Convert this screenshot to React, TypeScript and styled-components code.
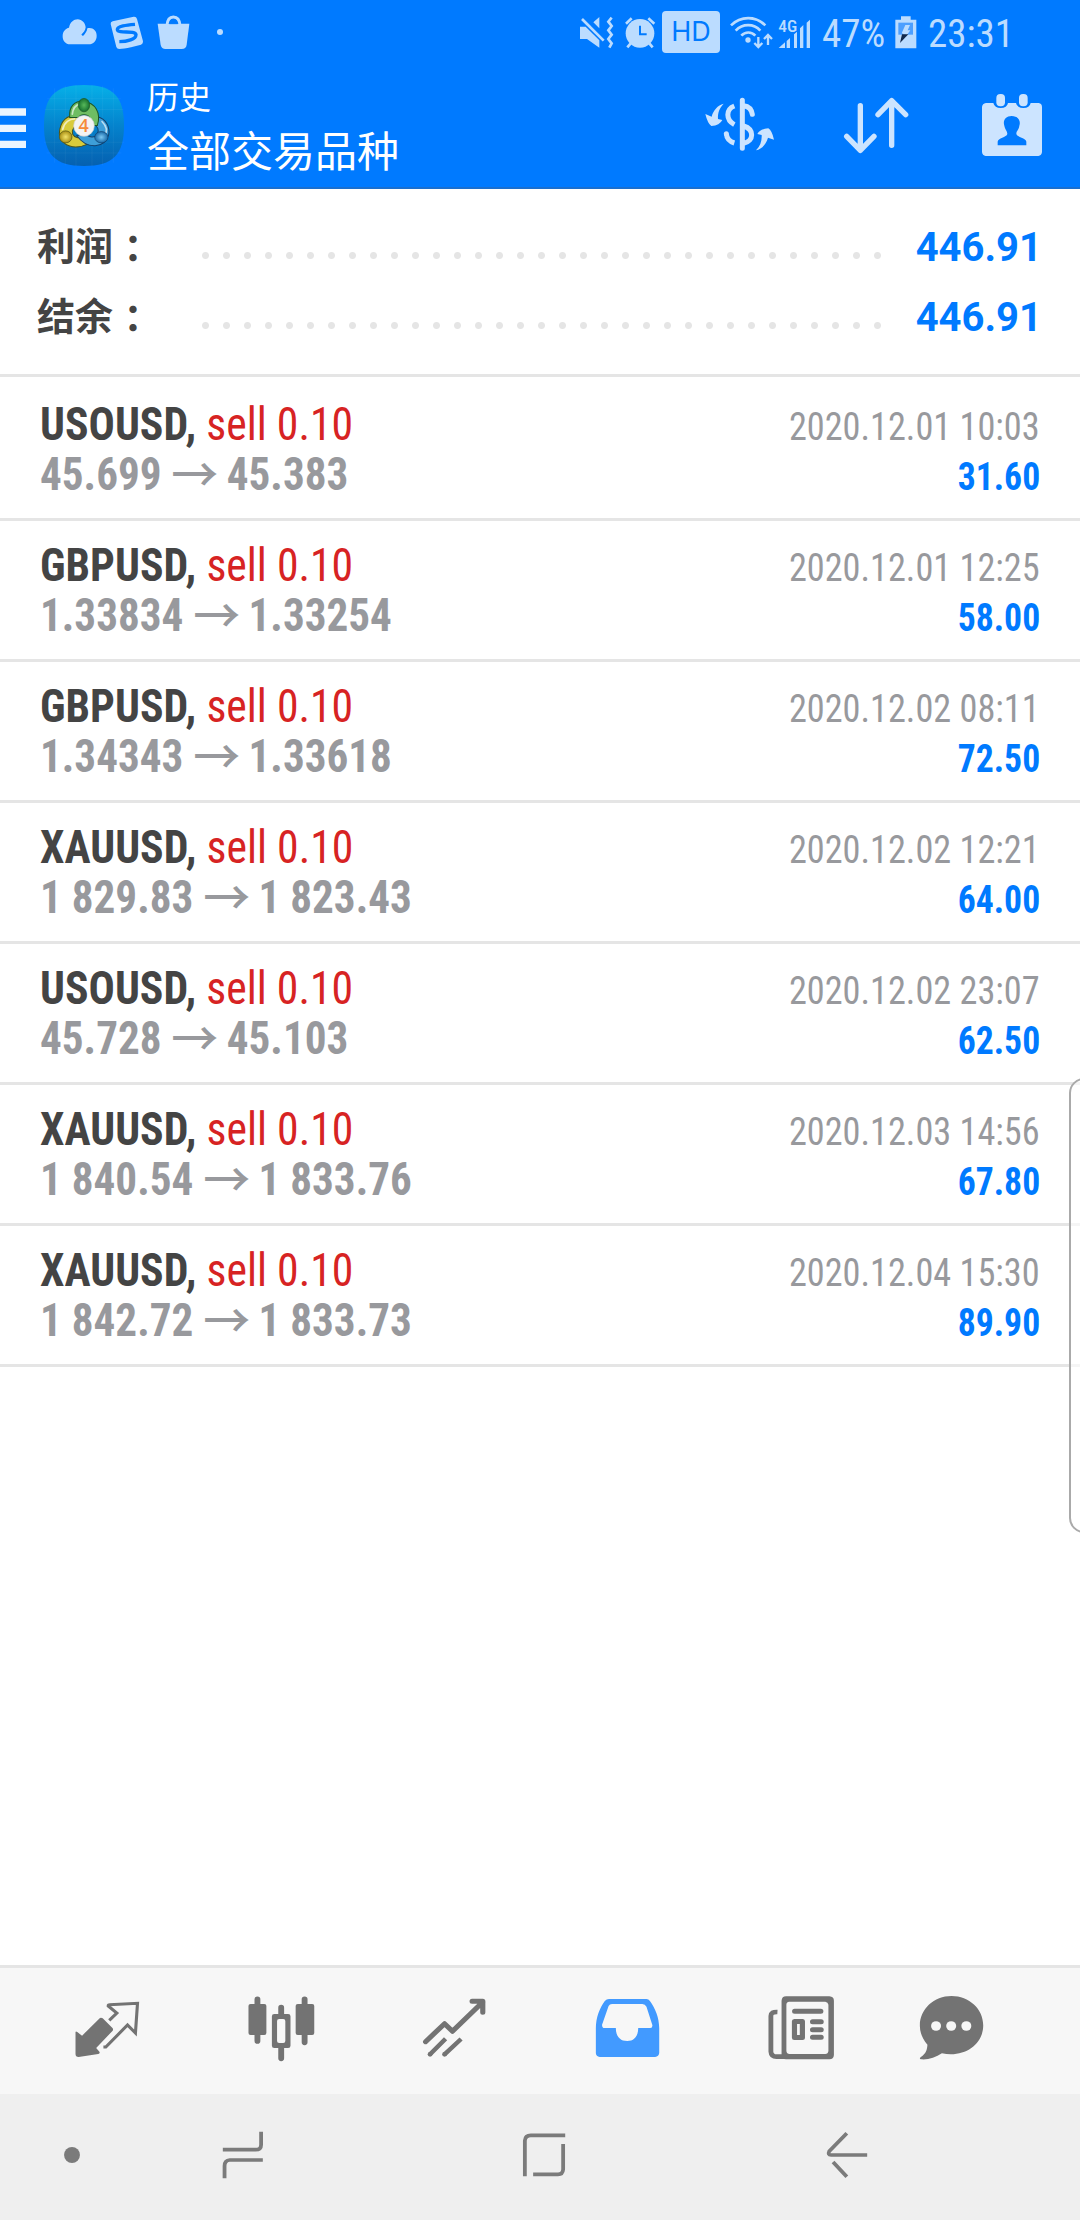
import React from "react";
import styled, { createGlobalStyle } from "styled-components";

const condensed = `"Roboto Condensed", Roboto, "Noto Sans CJK SC", sans-serif`;

const GlobalStyle = createGlobalStyle`
  body { margin: 0; background: #fff; }
  * { box-sizing: border-box; }
  svg { display: block; flex: none; }
`;

const Screen = styled.div`
  position: relative;
  width: 1080px;
  height: 2220px;
  display: flex;
  flex-direction: column;
  overflow: hidden;
  background: #fff;
  font-family: ${condensed};
`;

const Header = styled.header`
  height: 189px;
  background: #007aff;
  border-bottom: 2px solid #1a6fcf;
`;

const StatusBar = styled.div`
  height: 66px;
  display: flex;
  justify-content: space-between;
  align-items: flex-start;
  color: #bbdcff;
`;

const StatusGroup = styled.div`
  display: flex;
  align-items: flex-start;
  height: 66px;
`;

const StatusText = styled.span<{ $width: number; $gap: number }>`
  width: ${(p) => p.$width}px;
  margin-left: ${(p) => p.$gap}px;
  font-size: 39px;
  line-height: 46px;
  padding-top: 11px;
  white-space: nowrap;
`;

const HdBadge = styled.span`
  width: 58px;
  height: 42px;
  margin: 11px 0 0 6px;
  border-radius: 4px;
  background: #bbdcff;
  color: #007aff;
  font: 400 27px/42px Inter, sans-serif;
  text-align: center;
`;

const Toolbar = styled.div`
  height: 121px;
  display: flex;
  align-items: flex-start;
  padding-right: 37px;
`;

const Titles = styled.div`
  flex: 1;
  display: flex;
  flex-direction: column;
  padding: 9px 0 0 23px;
  color: #fff;
  font-family: Roboto, "Noto Sans CJK SC", sans-serif;
`;

const Subtitle = styled.span`
  font-size: 32px;
  line-height: 46px;
`;

const Title = styled.span`
  font-size: 42px;
  line-height: 64px;
`;

const Actions = styled.div`
  display: flex;
  padding-top: 26px;
  color: #cce4ff;
`;

const Summary = styled.section`
  height: 188px;
  padding: 22px 38px 0 37px;
  border-bottom: 3px solid #e5e5e5;
`;

const SummaryRow = styled.div`
  height: 70px;
  display: flex;
  align-items: center;
  color: #444;
`;

const SummaryLabel = styled.span`
  display: flex;
  width: 158px;
  padding-bottom: 3px;
  font: 700 38px/67px "Noto Sans CJK SC", sans-serif;
`;

const Colon = styled.span`
  padding: 2px 0 0 1px;
  font-family: "Noto Sans CJK JP", sans-serif;
`;

const Dots = styled.span`
  width: 693px;
  height: 21px;
  margin-top: 19px;
  background: radial-gradient(circle at center, #e5e5e5 3px, transparent 4px) 0 0 / 21px 21px;
`;

const SummaryValue = styled.span`
  flex: 1;
  padding-top: 3px;
  text-align: right;
  color: #007aff;
  font: 700 40px/67px Roboto, sans-serif;
`;

const DealList = styled.main`
  flex: 1;
  padding-top: 3px;
`;

const Deal = styled.article`
  height: 141px;
  display: flex;
  justify-content: space-between;
  padding: 19px 40px 0;
  border-bottom: 3px solid #e5e5e5;
`;

const DealSide = styled.div<{ $right?: boolean }>`
  display: flex;
  flex-direction: column;
  align-items: ${(p) => (p.$right ? "flex-end" : "flex-start")};
  padding-top: ${(p) => (p.$right ? 3 : 0)}px;
  white-space: nowrap;
`;

const Instrument = styled.div`
  font-size: 47px;
  line-height: 50px;
  font-weight: 700;
  color: #444;
  transform: scaleX(0.93);
  transform-origin: left;
`;

const Operation = styled.span`
  font-weight: 400;
  color: #d72323;
`;

const Prices = styled.div`
  display: flex;
  font-size: 47px;
  line-height: 50px;
  font-weight: 700;
  color: #98999d;
  transform: scaleX(0.918);
  transform-origin: left;
`;

const Arrow = styled.span`
  width: 71px;
  text-align: center;
  font-family: "Noto Sans CJK SC", sans-serif;
  font-weight: 500;
  transform: translate(1px, -2px) scaleX(1.09);
`;

const Time = styled.div`
  font-size: 39px;
  line-height: 50px;
  color: #98999d;
  transform: scaleX(0.93);
  transform-origin: right;
`;

const Profit = styled.div`
  font-size: 39px;
  line-height: 50px;
  font-weight: 700;
  color: #007aff;
  transform: scaleX(0.915);
  transform-origin: right;
`;

const EdgePanel = styled.aside`
  position: absolute;
  left: 1069px;
  top: 1078px;
  width: 30px;
  height: 455px;
  border: 2px solid #aaa;
  border-radius: 16px;
  background: rgba(255, 255, 255, 0.6);
`;

const TabBar = styled.nav`
  height: 129px;
  display: flex;
  padding-left: 21px;
  border-top: 3px solid #e5e5e5;
  background: #f7f7f7;
`;

const Tab = styled.div<{ $width?: number; $active?: boolean }>`
  width: ${(p) => p.$width ?? 173.2}px;
  padding-top: 25px;
  display: flex;
  justify-content: center;
  color: ${(p) => (p.$active ? "#429aff" : "#737373")};
`;

const SystemBar = styled.footer`
  height: 126px;
  display: grid;
  grid-template-columns: 144px 197px 406px 200px;
  justify-items: center;
  padding-top: 36px;
  background: #efefef;
  color: #7b7b7b;
`;

const Svg = styled.svg<{ $ml?: number; $mt?: number }>`
  margin-left: ${(p) => p.$ml ?? 0}px;
  margin-top: ${(p) => p.$mt ?? 0}px;
`;

type GlyphProps = { w: number; h: number; box: string; ml?: number; mt?: number; children: React.ReactNode };

const Glyph = ({ w, h, box, ml, mt, children }: GlyphProps) => (
  <Svg $ml={ml} $mt={mt} width={w} height={h} viewBox={box} preserveAspectRatio="none" fill="currentColor">
    {children}
  </Svg>
);

const TabGlyph = ({ x, children }: { x: number; children: React.ReactNode }) => (
  <Glyph w={74.4} h={70} box={`${x} 129 216 210`}>{children}</Glyph>
);

const line = { fill: "none", stroke: "currentColor" } as const;

const deals = [
  ["USOUSD", "45.699", "45.383", "2020.12.01 10:03", "31.60"],
  ["GBPUSD", "1.33834", "1.33254", "2020.12.01 12:25", "58.00"],
  ["GBPUSD", "1.34343", "1.33618", "2020.12.02 08:11", "72.50"],
  ["XAUUSD", "1 829.83", "1 823.43", "2020.12.02 12:21", "64.00"],
  ["USOUSD", "45.728", "45.103", "2020.12.02 23:07", "62.50"],
  ["XAUUSD", "1 840.54", "1 833.76", "2020.12.03 14:56", "67.80"],
  ["XAUUSD", "1 842.72", "1 833.73", "2020.12.04 15:30", "89.90"],
];

const AppLogo = () => (
  <Glyph w={80} h={81} box="132 255 240 242" ml={18} mt={19}>
    <defs>
      <linearGradient id="bg" x1="0" y1="0" x2="0" y2="1">
        <stop offset="0" stopColor="#06b0e8" />
        <stop offset="0.5" stopColor="#0483cd" />
        <stop offset="1" stopColor="#0560b0" />
      </linearGradient>
      <radialGradient id="green"><stop offset="0" stopColor="#58b95a" /><stop offset="1" stopColor="#17722f" /></radialGradient>
      <radialGradient id="gold"><stop offset="0" stopColor="#f2e36b" /><stop offset="1" stopColor="#a88d12" /></radialGradient>
      <radialGradient id="azure"><stop offset="0" stopColor="#7cc8f2" /><stop offset="1" stopColor="#1668a8" /></radialGradient>
    </defs>
    <path d="M252 255C340 255 372 290 372 376S340 497 252 497 132 462 132 376 164 255 252 255Z" fill="url(#bg)" />
    <path d="M164 265V487M196 257V495M228 255V497M276 255V497M308 257V495M340 265V487M142 296H362M134 328H370M132 426H372M140 458H364" stroke="#fff" strokeOpacity="0.07" strokeWidth="2" fill="none" />
    <path d="M236 346C202 342 180 362 178 400C184 440 226 450 266 430L254 408C240 416 224 414 218 402C214 388 222 376 240 374Z" fill="#d8cb3c" stroke="#4f5318" strokeWidth="3" />
    <path d="M292 350C318 356 330 380 326 404C314 444 262 450 230 406L256 402C268 412 284 414 292 402C298 390 294 378 280 372Z" fill="#3d9ed8" stroke="#123f6b" strokeWidth="3" />
    <path d="M209 352C206 316 226 302 252 304C286 308 304 338 292 376L268 376C272 352 268 344 252 344C242 344 238 348 236 352Z" fill="#6fbd63" stroke="#1c5526" strokeWidth="3" />
    <path d="M217 342C219 322 230 314 240 312M188 388C192 366 210 356 224 356M306 364C320 378 322 394 314 406" stroke="#fff" strokeOpacity="0.65" strokeWidth="5" strokeLinecap="round" fill="none" />
    <ellipse cx="252" cy="315" rx="17" ry="20" fill="url(#green)" stroke="#1c5526" strokeWidth="2" />
    <ellipse cx="197" cy="410" rx="19" ry="18" fill="url(#gold)" stroke="#4f5318" strokeWidth="2" />
    <ellipse cx="304" cy="411" rx="20" ry="17" fill="url(#azure)" stroke="#123f6b" strokeWidth="2" />
    <circle cx="252" cy="377" r="31" fill="#f3f3f3" stroke="#d0d0d0" strokeWidth="2" />
    <text x="251" y="396" textAnchor="middle" fontFamily="Open Sans" fontWeight="600" fontSize="54" fill="#f68b3a">4</text>
  </Glyph>
);

export default function App() {
  return (
    <Screen>
      <GlobalStyle />
      <Header>
        <StatusBar>
          <StatusGroup>
            <Glyph w={35} h={26} box="186 58 105 78" ml={62} mt={19}>
              <path d="M211 134C196 134 187 121 188 108C188 95 197 86 207 84C210 68 221 59 233 59C246 59 256 70 257 83C256 93 250 99 244 105L249 109C256 102 261 95 262 86C278 82 290 93 290 108C290 124 280 134 266 134Z" />
            </Glyph>
            <Glyph w={34} h={34} box="329 47 102 102" ml={13} mt={15.6}>
              <path d="M337 63L400 49Q408 48 410 56L428 123Q429 130 422 133L392 141Q370 146 357 146Q350 146 348 140L331 71Q330 65 337 63Z" />
              <path {...line} stroke="#007aff" strokeWidth="10" d="M404 72C380 74 350 77 351 88C354 102 404 88 407 103C407 117 380 124 357 124" />
            </Glyph>
            <Glyph w={34} h={35} box="472 46 102 105" ml={13} mt={15.3}>
              <path {...line} strokeWidth="9" d="M502 78C503 62 508 52 521 52C534 52 540 62 541 78" />
              <path d="M474 72H569L561 135Q559 148 546 148H497Q486 148 483 136Z" />
              <path {...line} stroke="#007aff" strokeWidth="3" d="M509 72C511 64 515 60 521 60C528 60 532 64 534 72Z" />
            </Glyph>
            <Glyph w={6} h={6} box="0 0 6 6" ml={25.5} mt={29}>
              <circle cx="3" cy="3" r="3" />
            </Glyph>
          </StatusGroup>
          <StatusGroup>
            <Glyph w={35} h={33} box="58 48 105 99" mt={16}>
              <path d="M61 80H78L119 121V143L82 117H61ZM101 67L119 51V85Z" />
              <path {...line} strokeWidth="8" d="M67 57L132 122" />
              <path {...line} strokeWidth="8" d="M156 53L146 65L156 78L146 91L156 104L146 117L156 130L149 143" />
            </Glyph>
            <Glyph w={32} h={33} box="192 48 96 99" ml={9.7} mt={16}>
              <circle cx="240" cy="100" r="43" />
              <path {...line} strokeWidth="8" d="M198 71L215 55M265 55L283 71M212 130L202 142M268 130L278 142" />
              <path {...line} stroke="#007aff" strokeWidth="6" d="M240 77V103H260" />
            </Glyph>
            <HdBadge>HD</HdBadge>
            <Glyph w={43} h={33} box="512 48 129 99" ml={10} mt={16}>
              <path {...line} strokeWidth="8" d="M515 76C544 47 589 47 618 76M529 92C550 70 583 70 603 92M546 107C558 94 577 95 588 107" />
              <circle cx="566" cy="120" r="8" />
              <path {...line} strokeWidth="7" d="M597 111V141M585 129L597 141L609 129M626 135V105M614 117L626 105L638 117" />
            </Glyph>
            <Glyph w={33} h={32} box="654 54 99 96" ml={4.5} mt={18}>
              <path d="M656 144L675 127V144ZM680 123L690 114V144H680ZM702 103L711 95V144H702ZM720 85L730 75V144H720ZM740 68L750 59V144H740Z" />
              <text x="655" y="95" fontFamily="Roboto Condensed, Roboto" fontWeight="500" fontSize="47" textLength="57" lengthAdjust="spacingAndGlyphs">4G</text>
            </Glyph>
            <StatusText $width={63} $gap={11.5}>47%</StatusText>
            <Glyph w={22} h={33} box="1007 49 66 99" ml={10} mt={16.3}>
              <path d="M1008 60H1025V50H1054V60H1071V146H1008Z" />
              <path fill="#4c9fff" d="M1017 69H1061V105H1017Z" />
              <path d="M1038 76H1052L1045 92H1053L1042 107L1027 101Z" />
              <path fill="#10284c" d="M1028 104H1047L1022 130Z" />
            </Glyph>
            <StatusText $width={152} $gap={11}>23:31</StatusText>
          </StatusGroup>
        </StatusBar>
        <Toolbar>
          <Glyph w={26} h={41} box="0 324 78 120" mt={42}>
            <path fill="#ebf5ff" d="M0 325H78V347H0ZM0 373H78V394H0ZM0 420H78V441H0Z" />
          </Glyph>
          <AppLogo />
          <Titles>
            <Subtitle>历史</Subtitle>
            <Title>全部交易品种</Title>
          </Titles>
          <Actions>
            <Glyph w={70} h={66} box="436 276 210 198">
              <path d="M492 311C479 324 474 339 475 357L488 360Q480 377 455 378Q444 371 437 342L456 350C461 330 474 316 492 311Z" />
              <path d="M589 451C602 438 607 423 606 405L593 402Q601 386 626 385Q637 392 643 419L625 413C619 433 607 447 589 451Z" />
              <path {...line} strokeWidth="15" d="M524 318C498 328 498 360 524 374M500 401C501 415 511 425 524 429" />
              <circle cx="500" cy="401" r="7.5" />
              <path {...line} strokeWidth="15" strokeLinecap="round" d="M548 301V445M552 317C568 319 576 329 578 343M552 378C584 388 584 423 552 430" />
            </Glyph>
            <Glyph w={66} h={66} box="849 276 198 198" ml={68}>
              <path {...line} strokeWidth="16" strokeLinecap="round" strokeLinejoin="round" d="M901 317V451M860 409L901 451L942 409M995 436V302M954 344L995 302L1037 344" />
            </Glyph>
            <Glyph w={62} h={66} box="1263 276 186 198" ml={72}>
              <path fillRule="evenodd" d="M1278 309H1300Q1304 324 1322 324Q1341 324 1344 309H1368Q1372 324 1390 324Q1409 324 1412 309H1436Q1446 311 1446 321V456Q1445 466 1435 468H1277Q1267 466 1266 456V321Q1267 311 1278 309ZM1355 348C1336 348 1328 363 1333 377C1335 389 1342 392 1342 402C1340 412 1313 414 1313 425V436H1399V425C1399 414 1371 412 1369 402C1369 392 1377 389 1378 377C1383 363 1375 348 1355 348Z" />
              <rect x="1309" y="282" width="26" height="37" rx="12" />
              <rect x="1377" y="282" width="26" height="37" rx="12" />
            </Glyph>
          </Actions>
        </Toolbar>
      </Header>

      <Summary>
        {["利润", "结余"].map((label) => (
          <SummaryRow key={label}>
            <SummaryLabel>{label}<Colon>：</Colon></SummaryLabel>
            <Dots />
            <SummaryValue>446.91</SummaryValue>
          </SummaryRow>
        ))}
      </Summary>

      <DealList>
        {deals.map(([symbol, open, close, time, profit]) => (
          <Deal key={time}>
            <DealSide>
              <Instrument>{symbol}, <Operation>sell 0.10</Operation></Instrument>
              <Prices>{open}<Arrow>→</Arrow>{close}</Prices>
            </DealSide>
            <DealSide $right>
              <Time>{time}</Time>
              <Profit>{profit}</Profit>
            </DealSide>
          </Deal>
        ))}
      </DealList>

      <TabBar>
        <Tab>
          <TabGlyph x={206}>
            <path d="M222 246Q223 243 227 246L241 257L293 204Q297 202 301 205L330 235Q332 239 330 242L282 294L292 306Q293 310 288 312L231 321Q222 321 222 312Z" />
            <path {...line} strokeWidth="9" d="M320 211L342 189L317 168Q317 164 320 164L402 160L396 249L373 225L310 291L303 291" />
          </TabGlyph>
        </Tab>
        <Tab>
          <TabGlyph x={707}>
            <path {...line} strokeWidth="17" strokeLinecap="round" d="M746 148V273M883 148V277M815 173V198M815 290V325" />
            <rect x="720" y="162" width="52" height="93" rx="6" />
            <rect x="857" y="162" width="54" height="93" rx="6" />
            <path fillRule="evenodd" d="M795 192H835Q842 192 842 199V287Q842 294 835 294H795Q788 294 788 287V199Q788 192 795 192ZM809 207Q803 207 803 213V273Q803 279 809 279H821Q827 279 827 273V213Q827 207 821 207Z" />
          </TabGlyph>
        </Tab>
        <Tab>
          <TabGlyph x={1209}>
            <path {...line} strokeWidth="15" strokeLinecap="round" strokeLinejoin="round" d="M1234 275L1289 221L1312 244L1400 156M1369 154H1400V187" />
            <path {...line} strokeWidth="13" d="M1292 266L1247 313M1337 267L1289 313" />
            <circle cx="1247" cy="313" r="7" /><circle cx="1289" cy="313" r="7" />
          </TabGlyph>
        </Tab>
        <Tab $active>
          <TabGlyph x={145}>
            <path fillRule="evenodd" d="M200 147H309Q315 147 319 153C334 174 346 203 346 235V309Q345 320 334 321H173Q163 320 162 310V235C162 203 173 174 188 153Q193 147 200 147ZM209 162Q202 162 199 168L180 224Q180 234 187 234H220C220 258 231 273 253 273C274 273 285 258 285 234H320Q327 233 326 225L309 170Q305 163 297 162Z" />
          </TabGlyph>
        </Tab>
        <Tab $width={175.4}>
          <TabGlyph x={652}>
            <path fillRule="evenodd" d="M716 139H842Q855 140 855 152V315Q854 328 842 328H716Q703 328 703 315V152Q704 139 716 139ZM725 155Q717 156 717 164V303Q718 312 726 312H830Q838 312 839 303V164Q838 156 830 155Z" />
            <path {...line} strokeWidth="14" d="M691 186Q672 185 672 198V305Q673 320 688 320H712" />
            <path {...line} strokeWidth="15" strokeLinecap="round" d="M741 184H817M793 215H818M793 239H818M793 262H818" />
            <path fillRule="evenodd" d="M740 207H765Q771 208 771 214V264Q771 270 764 270H740Q733 270 733 263V214Q733 208 740 207ZM748 222V255H756V222Z" />
          </TabGlyph>
        </Tab>
        <Tab $width={124}>
          <TabGlyph x={1085}>
            <path d="M1194 138C1245 138 1286 177 1286 226C1286 283 1232 324 1166 310C1148 323 1125 330 1105 328Q1099 326 1105 321C1120 310 1123 299 1124 284C1110 267 1102 249 1102 227C1102 177 1143 138 1194 138Z" />
            <g fill="#f7f7f7"><circle cx="1149" cy="228" r="14.5" /><circle cx="1193" cy="228" r="14.5" /><circle cx="1237" cy="228" r="14.5" /></g>
          </TabGlyph>
        </Tab>
      </TabBar>

      <SystemBar>
        <Glyph w={20} h={50} box="180 540 58 150"><ellipse cx="209" cy="615" rx="23" ry="24" /></Glyph>
        <Glyph w={50} h={50} box="632 540 145 150">
          <path {...line} strokeWidth="11" d="M757 545V584Q757 599 741 599H646M762 630H666Q651 631 651 648V685" />
        </Glyph>
        <Glyph w={50} h={50} box="1507 540 145 150">
          <path {...line} strokeWidth="11" d="M1524 679V572Q1525 556 1541 556H1641M1635 582V658Q1634 673 1620 673H1548" />
        </Glyph>
        <Glyph w={50} h={50} box="820 540 145 150">
          <path {...line} strokeWidth="11" strokeLinejoin="round" d="M892 550L841 604Q836 615 846 615H951M852 636L892 680" />
        </Glyph>
      </SystemBar>
      <EdgePanel />
    </Screen>
  );
}
